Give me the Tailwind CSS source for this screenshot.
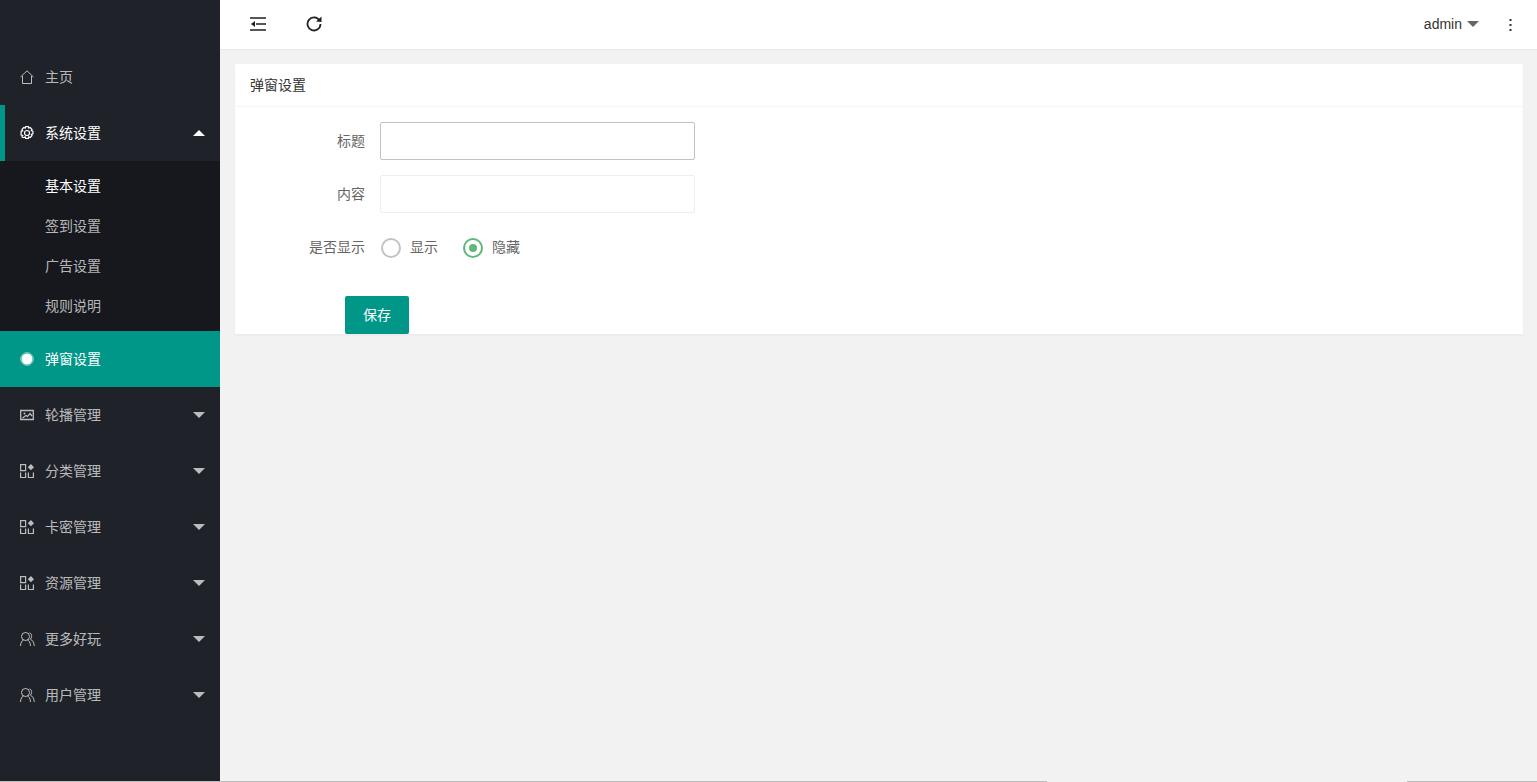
<!DOCTYPE html>
<html lang="zh-CN">
<head>
  <meta charset="UTF-8">
  <title>弹窗设置</title>
  <script src="https://cdn.jsdelivr.net/npm/@tailwindcss/browser@4"></script>
</head>
<body class="bg-[#f2f2f2] font-['Liberation_Sans','Noto_Sans_CJK_SC',sans-serif] text-[14px] overflow-hidden">
  <div class="flex h-[781px] w-[1537px]">
    <!-- Sidebar -->
    <aside class="w-[220px] shrink-0 bg-[#20222a] pt-[49px] text-[14px] text-white/70">
      <a class="flex h-[56px] items-center pl-[20px]">
        <svg class="w-[14px] h-[14px] mr-[11px]" viewBox="0 0 14 14" fill="none" stroke="currentColor" stroke-width="1"><path d="M0.5 7 7 .8 13.500 7M2.500 6v7.500h9V6"/></svg>
        <span>主页</span>
      </a>
      <div class="flex h-[56px] items-center pl-[20px] pr-[15px] relative text-white">
        <span class="absolute left-0 top-0 h-full w-[5px] bg-[#009688]"></span>
        <svg class="w-[14px] h-[14px] mr-[11px]" viewBox="0 0 14 14" fill="none" stroke="currentColor" stroke-width="1.200"><circle cx="7" cy="7" r="2.500"/><path d="M5.600.6h2.800l.4 1.500 1.400-.6 1.800 1.800-.7 1.400 1.600.4v2.800l-1.600.4.700 1.400-1.800 1.800-1.400-.6-.4 1.500H5.600l-.4-1.500-1.400.6L2 10.900l.7-1.400-1.600-.4V5.300l1.600-.4L2 3.300l1.800-1.800 1.400.6z"/></svg>
        <span>系统设置</span>
        <svg class="ml-auto w-[12px] h-[6px]" viewBox="0 0 12 6" fill="currentColor"><path d="M0 6 6 0l6 6z"/></svg>
      </div>
      <div class="bg-[#16181d] py-[5px]">
        <a class="flex h-[40px] items-center pl-[45px] text-white">基本设置</a>
        <a class="flex h-[40px] items-center pl-[45px]">签到设置</a>
        <a class="flex h-[40px] items-center pl-[45px]">广告设置</a>
        <a class="flex h-[40px] items-center pl-[45px]">规则说明</a>
      </div>
      <div class="flex h-[56px] items-center pl-[20px] bg-[#009688] text-white">
        <svg class="w-[14px] h-[14px] mr-[11px]" viewBox="0 0 14 14"><circle cx="7" cy="7" r="5.500" fill="#fff"/><circle cx="7" cy="7" r="6.300" fill="none" stroke="#fff" stroke-opacity=".6"/></svg>
        <span>弹窗设置</span>
      </div>
      <div class="flex h-[56px] items-center pl-[20px] pr-[15px]">
        <svg class="w-[14px] h-[14px] mr-[11px]" viewBox="0 0 14 14" fill="none" stroke="currentColor" stroke-width="1.300"><path d="M.7 2.500h12.600v9H.7z"/><circle cx="4.500" cy="5.500" r="1" fill="currentColor" stroke="none"/><path d="M2.500 10 6 7.500l1.500 1L10 5.500l2 2.500"/></svg>
        <span>轮播管理</span>
        <svg class="ml-auto w-[12px] h-[6px]" viewBox="0 0 12 6" fill="currentColor"><path d="M0 0h12L6 6z"/></svg>
      </div>
      <div class="flex h-[56px] items-center pl-[20px] pr-[15px]">
        <svg class="w-[14px] h-[14px] mr-[11px]" viewBox="0 0 14 14" fill="none" stroke="currentColor" stroke-width="1.200"><path d="M.6.600h5v6h-5zM.6 8.500v5h5v-5M8.400 8.500v5h5v-5"/><path fill="currentColor" stroke="none" d="M10.900 0l3.100 3.200-3.100 3.100-3.100-3.100z"/></svg>
        <span>分类管理</span>
        <svg class="ml-auto w-[12px] h-[6px]" viewBox="0 0 12 6" fill="currentColor"><path d="M0 0h12L6 6z"/></svg>
      </div>
      <div class="flex h-[56px] items-center pl-[20px] pr-[15px]">
        <svg class="w-[14px] h-[14px] mr-[11px]" viewBox="0 0 14 14" fill="none" stroke="currentColor" stroke-width="1.200"><path d="M.6.600h5v6h-5zM.6 8.500v5h5v-5M8.400 8.500v5h5v-5"/><path fill="currentColor" stroke="none" d="M10.900 0l3.100 3.200-3.100 3.100-3.100-3.100z"/></svg>
        <span>卡密管理</span>
        <svg class="ml-auto w-[12px] h-[6px]" viewBox="0 0 12 6" fill="currentColor"><path d="M0 0h12L6 6z"/></svg>
      </div>
      <div class="flex h-[56px] items-center pl-[20px] pr-[15px]">
        <svg class="w-[14px] h-[14px] mr-[11px]" viewBox="0 0 14 14" fill="none" stroke="currentColor" stroke-width="1.200"><path d="M.6.600h5v6h-5zM.6 8.500v5h5v-5M8.400 8.500v5h5v-5"/><path fill="currentColor" stroke="none" d="M10.900 0l3.100 3.200-3.100 3.100-3.100-3.100z"/></svg>
        <span>资源管理</span>
        <svg class="ml-auto w-[12px] h-[6px]" viewBox="0 0 12 6" fill="currentColor"><path d="M0 0h12L6 6z"/></svg>
      </div>
      <div class="flex h-[56px] items-center pl-[20px] pr-[15px]">
        <svg class="w-[15px] h-[14px] mr-[10px]" viewBox="0 0 15 14" fill="none" stroke="currentColor"><circle cx="5.500" cy="4.500" r="4"/><path d="M.5 14c.2-3.500 1.500-5.500 3-6M7.500 8c1.500.5 2.800 2.500 3 6M9.500.8c2.300.6 3 4.500.8 6.400 2 .8 3.700 3 4 6.800"/></svg>
        <span>更多好玩</span>
        <svg class="ml-auto w-[12px] h-[6px]" viewBox="0 0 12 6" fill="currentColor"><path d="M0 0h12L6 6z"/></svg>
      </div>
      <div class="flex h-[56px] items-center pl-[20px] pr-[15px]">
        <svg class="w-[15px] h-[14px] mr-[10px]" viewBox="0 0 15 14" fill="none" stroke="currentColor"><circle cx="5.500" cy="4.500" r="4"/><path d="M.5 14c.2-3.500 1.500-5.500 3-6M7.500 8c1.500.5 2.800 2.500 3 6M9.500.8c2.300.6 3 4.500.8 6.400 2 .8 3.700 3 4 6.800"/></svg>
        <span>用户管理</span>
        <svg class="ml-auto w-[12px] h-[6px]" viewBox="0 0 12 6" fill="currentColor"><path d="M0 0h12L6 6z"/></svg>
      </div>
    </aside>

    <div class="flex-1 min-w-0">
      <!-- Header -->
      <header class="h-[50px] bg-white border-b border-[#e8e8e8] flex items-center pl-[30px] pr-[25px] text-[#333]">
        <svg class="w-[16px] h-[14px] -mt-[1px]" viewBox="0 0 16 14" fill="none" stroke="#222" stroke-width="1.300"><path d="M0 1h16M6 7h10M0 13h16"/><path fill="#222" stroke="none" d="M1 7l4-3v6z"/></svg>
        <svg class="ml-[40px] w-[16px] h-[16px] -mt-[1px]" viewBox="0 0 16 16" fill="none" stroke="#222" stroke-width="1.800"><path d="M13.500 4.500A6.500 6.500 0 1 0 14.500 8"/><path fill="#222" stroke="none" d="M10 5.500 15.500 6V.5z"/></svg>
        <span class="ml-auto -mt-[1px]">admin</span>
        <svg class="ml-[5px] w-[12px] h-[6px] -mt-[1px]" viewBox="0 0 12 6" fill="#666"><path d="M0 0h12L6 6z"/></svg>
        <svg class="ml-[30px] w-[3px] h-[12px]" viewBox="0 0 3 12" fill="#333"><rect x=".5" width="2" height="2"/><rect x=".5" y="5" width="2" height="2"/><rect x=".5" y="10" width="2" height="2"/></svg>
      </header>

      <!-- Card -->
      <main class="pt-[14px] pl-[15px] pr-[14px]">
        <section class="bg-white h-[270px] shadow-[0_1px_2px_rgba(0,0,0,0.05)]">
          <div class="h-[43px] border-b border-[#f6f6f6] flex items-center pl-[15px] text-[#333]">弹窗设置</div>
          <div class="pt-[15px] text-[#666]">
            <div class="flex items-center h-[38px]">
              <label class="w-[130px] text-right">标题</label>
              <input class="ml-[15px] w-[315px] h-[38px] border border-[#c2c2c2] rounded-[2px] bg-white outline-none" type="text">
            </div>
            <div class="flex items-center h-[38px] mt-[15px]">
              <label class="w-[130px] text-right">内容</label>
              <input class="ml-[15px] w-[315px] h-[38px] border border-[#eeeeee] rounded-[2px] bg-white outline-none" type="text">
            </div>
            <div class="flex items-center h-[38px] mt-[15px]">
              <label class="w-[130px] text-right">是否显示</label>
              <span class="ml-[16px] w-[20px] h-[20px] rounded-full border-2 border-[#c2c2c2] mt-[1px]"></span>
              <span class="ml-[9px] mt-[1px]">显示</span>
              <span class="ml-[25px] w-[20px] h-[20px] rounded-full border-2 border-[#5fb878] mt-[1px] flex items-center justify-center"><span class="w-[8px] h-[8px] rounded-full bg-[#5fb878]"></span></span>
              <span class="ml-[9px] mt-[1px]">隐藏</span>
            </div>
            <button class="block ml-[110px] mt-[30px] w-[64px] h-[38px] bg-[#009688] text-white rounded-[2px]">保存</button>
          </div>
        </section>
      </main>
    </div>
  </div>
  <div class="flex h-[1px] w-[1537px]">
    <div class="w-[1047px] bg-[#bdbdbd]"></div>
    <div class="w-[360px]"></div>
    <div class="flex-1 bg-[#bdbdbd]"></div>
  </div>
</body>
</html>
